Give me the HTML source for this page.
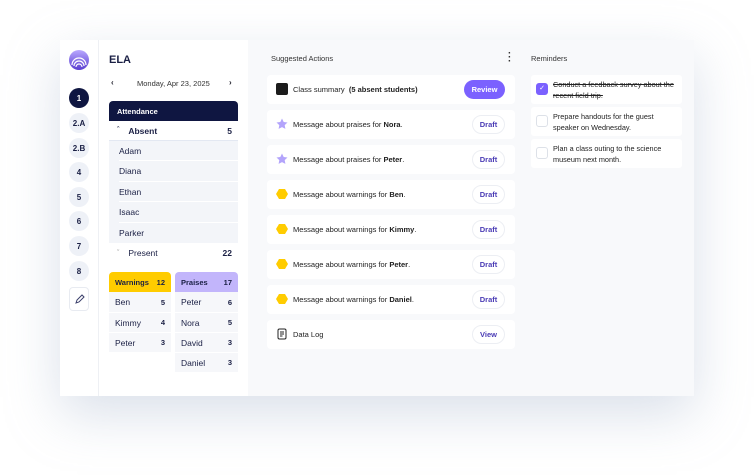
<!DOCTYPE html>
<html><head><style>
*{box-sizing:border-box;margin:0;padding:0}
body{width:754px;height:476px;background:#fff;font-family:"Liberation Sans",sans-serif;position:relative;overflow:hidden;color:#1c1c28}
.panel{position:absolute;left:60px;top:40px;width:634px;height:356px;background:#f8f9fb;box-shadow:0 18px 50px rgba(150,165,195,.35)}
.side{position:absolute;left:0;top:0;width:39px;height:356px;background:#fff;border-right:1px solid #eef0f4}
.nav{position:absolute;left:9px;width:20px;height:20px;border-radius:50%;background:#eef1f7;font-size:8px;font-weight:bold;color:#1a1f44;display:flex;align-items:center;justify-content:center}
.nav.on{background:#0f1641;color:#fff}
.left{position:absolute;left:39px;top:0;width:149px;height:356px;background:#fff}
.abs{position:absolute;font-size:8px}
.row{position:absolute;left:10px;width:129px;height:20px;display:flex;align-items:center;font-size:8.5px;color:#1a1f44}
.card{position:absolute;left:207px;width:248px;height:29px;background:#fff;border-radius:4px;display:flex;align-items:center;font-size:7.5px;color:#222}
.card .ic{position:absolute;left:9px;top:8px;width:12px;height:12px}
.card .t{position:absolute;left:26px}
.btn{position:absolute;right:10px;top:5px;width:33px;height:19px;border-radius:10px;border:1px solid #eceef3;font-size:7.5px;font-weight:bold;color:#4a3bb5;display:flex;align-items:center;justify-content:center}
.rem{position:absolute;left:471px;width:151px;background:#fff;border-radius:3px;font-size:7.3px;line-height:11px;color:#222;padding:4px 4px 4px 22px}
.cb{position:absolute;left:5px;top:8px;width:12px;height:12px;border:1px solid #dde1e8;border-radius:3px}
</style></head><body>
<div class="panel">
 <div class="side">
  <svg style="position:absolute;left:9px;top:10px" width="20" height="20" viewBox="0 0 20 20"><defs><linearGradient id="g" x1="0" y1="0" x2="0" y2="1"><stop offset="0" stop-color="#b9a8ff"/><stop offset="1" stop-color="#5a3fd0"/></linearGradient></defs><circle cx="10" cy="10" r="10" fill="url(#g)"/><path d="M3 15a7 7 0 0 1 14 0M5 16a5 5 0 0 1 10 0M7 17a3 3 0 0 1 6 0" stroke="#fff" stroke-width="1.2" fill="none"/></svg>
  <div class="nav on" style="top:48px">1</div>
  <div class="nav" style="top:73px">2.A</div>
  <div class="nav" style="top:98px">2.B</div>
  <div class="nav" style="top:122px">4</div>
  <div class="nav" style="top:147px">5</div>
  <div class="nav" style="top:171px">6</div>
  <div class="nav" style="top:196px">7</div>
  <div class="nav" style="top:221px">8</div>
  <div style="position:absolute;left:9px;top:247px;width:20px;height:24px;border:1px solid #e8ebf1;border-radius:4px;background:#fff"><svg width="20" height="22" viewBox="0 0 20 22"><path d="M6 15l1-3 5-5 2 2-5 5z" stroke="#3a3f6a" fill="none" stroke-width="1"/></svg></div>
 </div>
 <div class="left">
  <div class="abs" style="left:10px;top:14px;font-size:11px;font-weight:bold;color:#1a1f44">ELA</div>
  <div class="abs" style="left:12px;top:38px;font-weight:bold">&#8249;</div>
  <div class="abs" style="left:38px;top:39px;font-size:7.5px;color:#333">Monday, Apr 23, 2025</div>
  <div class="abs" style="left:130px;top:38px;font-weight:bold">&#8250;</div>
  <div class="row" style="top:61px;background:#0f1641;color:#fff;border-radius:4px 4px 0 0;font-size:7.5px;font-weight:bold;padding-left:8px">Attendance</div>
  <div class="row" style="top:81px;font-weight:bold;padding-left:8px;border-bottom:1px solid #e3e8f2"><span style="font-size:7px;margin-right:9px">&#710;</span>Absent<span style="margin-left:auto;margin-right:6px">5</span></div>
  <div class="row" style="top:101px;background:#f3f5f9;padding-left:10px;height:102px;display:block">
   <div style="height:20.4px;line-height:20px;border-bottom:1px solid #fff">Adam</div>
   <div style="height:20.4px;line-height:20px;border-bottom:1px solid #fff">Diana</div>
   <div style="height:20.4px;line-height:20px;border-bottom:1px solid #fff">Ethan</div>
   <div style="height:20.4px;line-height:20px;border-bottom:1px solid #fff">Isaac</div>
   <div style="height:20.4px;line-height:20px">Parker</div>
  </div>
  <div class="row" style="top:203px;padding-left:8px"><span style="font-size:7px;margin-right:9px;color:#888">&#711;</span>Present<span style="margin-left:auto;margin-right:6px;font-weight:bold">22</span></div>
  <div class="row" style="top:232px;width:62px;background:#ffcc00;border-radius:4px 4px 0 0;font-weight:bold;font-size:7.5px;padding:0 6px">Warnings<span style="margin-left:auto">12</span></div>
  <div class="row" style="top:252px;width:62px;background:#f6f7fa;padding:0 6px">Ben<span style="margin-left:auto;font-size:7.5px;font-weight:bold">5</span></div>
  <div class="row" style="top:272px;width:62px;background:#f6f7fa;padding:0 6px;border-top:1px solid #fff">Kimmy<span style="margin-left:auto;font-size:7.5px;font-weight:bold">4</span></div>
  <div class="row" style="top:292px;width:62px;background:#f6f7fa;padding:0 6px;border-top:1px solid #fff">Peter<span style="margin-left:auto;font-size:7.5px;font-weight:bold">3</span></div>
  <div class="row" style="top:232px;left:76px;width:63px;background:#c2b5fb;border-radius:4px 4px 0 0;font-weight:bold;font-size:7.5px;padding:0 6px">Praises<span style="margin-left:auto">17</span></div>
  <div class="row" style="top:252px;left:76px;width:63px;background:#f6f7fa;padding:0 6px">Peter<span style="margin-left:auto;font-size:7.5px;font-weight:bold">6</span></div>
  <div class="row" style="top:272px;left:76px;width:63px;background:#f6f7fa;padding:0 6px;border-top:1px solid #fff">Nora<span style="margin-left:auto;font-size:7.5px;font-weight:bold">5</span></div>
  <div class="row" style="top:292px;left:76px;width:63px;background:#f6f7fa;padding:0 6px;border-top:1px solid #fff">David<span style="margin-left:auto;font-size:7.5px;font-weight:bold">3</span></div>
  <div class="row" style="top:312px;left:76px;width:63px;background:#f6f7fa;padding:0 6px;border-top:1px solid #fff">Daniel<span style="margin-left:auto;font-size:7.5px;font-weight:bold">3</span></div>
 </div>
 <div class="abs" style="left:211px;top:14px;font-size:7.5px;color:#333">Suggested Actions</div>
 <div class="abs" style="left:448px;top:12px;font-size:10px;font-weight:bold;line-height:4px;color:#333">&middot;<br>&middot;<br>&middot;</div>
 <div class="card" style="top:35px"><div class="ic" style="background:#1c1c1c;border-radius:2px"></div><span class="t">Class summary &nbsp;<b>(5 absent students)</b></span><div class="btn" style="background:#7b61ff;color:#fff;border:none;width:41px;right:10px;top:5px">Review</div></div>
 <div class="card" style="top:70px"><svg class="ic" viewBox="0 0 12 12"><path d="M6 .5l1.7 3.5 3.8.5-2.8 2.6.7 3.8L6 9.1 2.6 10.9l.7-3.8L.5 4.5l3.8-.5z" fill="#b3a4fb"/></svg><span class="t">Message about praises for <b>Nora</b>.</span><div class="btn">Draft</div></div>
 <div class="card" style="top:105px"><svg class="ic" viewBox="0 0 12 12"><path d="M6 .5l1.7 3.5 3.8.5-2.8 2.6.7 3.8L6 9.1 2.6 10.9l.7-3.8L.5 4.5l3.8-.5z" fill="#b3a4fb"/></svg><span class="t">Message about praises for <b>Peter</b>.</span><div class="btn">Draft</div></div>
 <div class="card" style="top:140px"><svg class="ic" viewBox="0 0 12 12"><path d="M3 1h6l3 5-3 5H3L0 6z" fill="#ffcc00"/></svg><span class="t">Message about warnings for <b>Ben</b>.</span><div class="btn">Draft</div></div>
 <div class="card" style="top:175px"><svg class="ic" viewBox="0 0 12 12"><path d="M3 1h6l3 5-3 5H3L0 6z" fill="#ffcc00"/></svg><span class="t">Message about warnings for <b>Kimmy</b>.</span><div class="btn">Draft</div></div>
 <div class="card" style="top:210px"><svg class="ic" viewBox="0 0 12 12"><path d="M3 1h6l3 5-3 5H3L0 6z" fill="#ffcc00"/></svg><span class="t">Message about warnings for <b>Peter</b>.</span><div class="btn">Draft</div></div>
 <div class="card" style="top:245px"><svg class="ic" viewBox="0 0 12 12"><path d="M3 1h6l3 5-3 5H3L0 6z" fill="#ffcc00"/></svg><span class="t">Message about warnings for <b>Daniel</b>.</span><div class="btn">Draft</div></div>
 <div class="card" style="top:280px"><svg class="ic" viewBox="0 0 12 12"><rect x="2" y="1" width="8" height="10" rx="1.5" fill="none" stroke="#222" stroke-width="1"/><path d="M4 4h4M4 6h4M4 8h2.5" stroke="#222" stroke-width=".9"/></svg><span class="t">Data Log</span><div class="btn">View</div></div>
 <div class="abs" style="left:471px;top:14px;font-size:7.5px;color:#333">Reminders</div>
 <div class="rem" style="top:35px;height:29px;text-decoration:line-through"><div class="cb" style="background:#7b61ff;border-color:#7b61ff;color:#fff;font-size:7px;text-align:center;line-height:10px;text-decoration:none">&#10003;</div>Conduct a feedback survey about the recent field trip.</div>
 <div class="rem" style="top:67px;height:29px">
<div class="cb"></div>Prepare handouts for the guest speaker on Wednesday.</div>
 <div class="rem" style="top:99px;height:29px"><div class="cb"></div>Plan a class outing to the science museum next month.</div>
</div>
</body></html>
